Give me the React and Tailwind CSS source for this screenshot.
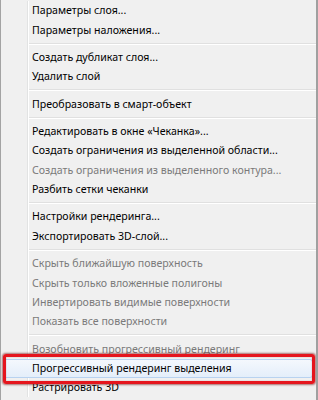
import React from "react";

const items = [
  { t: "Параметры слоя..." },
  { t: "Параметры наложения..." },
  { sep: true },
  { t: "Создать дубликат слоя..." },
  { t: "Удалить слой" },
  { sep: true },
  { t: "Преобразовать в смарт-объект" },
  { sep: true },
  { t: "Редактировать в окне «Чеканка»..." },
  { t: "Создать ограничения из выделенной области..." },
  { t: "Создать ограничения из выделенного контура...", d: true },
  { t: "Разбить сетки чеканки" },
  { sep: true },
  { t: "Настройки рендеринга..." },
  { t: "Экспортировать 3D-слой..." },
  { sep: true },
  { t: "Скрыть ближайшую поверхность", d: true },
  { t: "Скрыть только вложенные полигоны", d: true },
  { t: "Инвертировать видимые поверхности", d: true },
  { t: "Показать все поверхности", d: true },
  { sep: true },
  { t: "Возобновить прогрессивный рендеринг", d: true },
  { t: "Прогрессивный рендеринг выделения", hl: true },
  { t: "Растрировать 3D" },
];

function Sep() {
  return (
    <div className="flex h-[8px]">
      <div className="w-[27px] shrink-0 border-r border-[#e2e3e3]" />
      <div className="flex-1 flex flex-col justify-center border-l border-white">
        <div className="h-px bg-[#e0e0e0]" />
        <div className="h-px bg-white" />
      </div>
    </div>
  );
}

function Item({ t, d, hl }) {
  if (hl) {
    return (
      <div className="relative flex h-[19.35px]">
        <div className="absolute left-[2px] right-[3px] top-0 bottom-0 rounded-[3px] border border-[#b8d2f0] bg-gradient-to-b from-[#f4f8fd] to-[#e4eefa]" />
        <div className="relative w-[27px] shrink-0" />
        <div className="relative flex items-center pl-[4px] text-black whitespace-nowrap">{t}</div>
        <div className="absolute left-[2px] right-px -top-[5px] -bottom-[6px] rounded-[3px] border-[3px] border-[#e5151d] shadow-[0_0_2px_1px_rgba(110,0,0,0.55),inset_0_0_1px_rgba(110,0,0,0.6)]" />
      </div>
    );
  }
  return (
    <div className="flex h-[19.35px]">
      <div className="w-[27px] shrink-0 border-r border-[#e2e3e3]" />
      <div
        className={
          "flex-1 flex items-center border-l border-white pl-[3px] whitespace-nowrap " +
          (d ? "text-[#7a7a7a]" : "text-black")
        }
      >
        {t}
      </div>
    </div>
  );
}

export default function App() {
  return (
    <div
      className="w-[318px] h-[400px] overflow-hidden bg-[#f0f0f0] border-l border-[#a3a3a3] border-r-2 border-r-[#a0a0a0] pt-px text-[10.6px] leading-none"
      style={{ fontFamily: '"Noto Sans", "Open Sans", sans-serif' }}
    >
      {items.map((it, i) =>
        it.sep ? <Sep key={i} /> : <Item key={i} {...it} />
      )}
    </div>
  );
}
